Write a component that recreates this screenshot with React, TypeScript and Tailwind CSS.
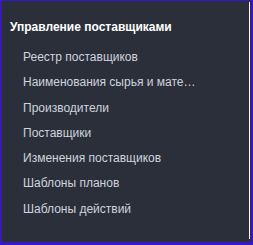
const items = [
  "Реестр поставщиков",
  "Наименования сырья и материалов",
  "Производители",
  "Поставщики",
  "Изменения поставщиков",
  "Шаблоны планов",
  "Шаблоны действий",
];

export default function App() {
  return (
    <div className="w-[253px] h-[245px] bg-[#2b2f3a] border-[#3a17c6] border-t-[1px] border-l-[2px] border-r-[2px] border-b-[3px] font-['Liberation_Sans',Arial,sans-serif]">
      <div className="h-[237px] mt-[1px] border-r border-white w-[248px]">
        <div className="pt-[17px] pl-[8px] text-[12px] leading-[16px] font-bold text-white">
          Управление поставщиками
        </div>
        <ul className="mt-[10px] pl-[21px] w-[199px]">
          {items.map((t) => (
            <li
              key={t}
              className="text-[12px] leading-[25.3px] text-[#cfd3dc] truncate"
            >
              {t}
            </li>
          ))}
        </ul>
      </div>
    </div>
  );
}
